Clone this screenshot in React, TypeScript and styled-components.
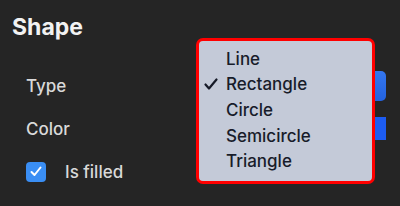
import React from 'react'
import styled, { createGlobalStyle } from 'styled-components'

const items = ['Line', 'Rectangle', 'Circle', 'Semicircle', 'Triangle']
const selected = 'Rectangle'

const App = () => {
  return (
    <Panel>
      <GlobalStyle />
      <Title>Shape</Title>
      <Form>
        <Row>
          <Label>Type</Label>
          <PopupButton />
        </Row>
        <Row>
          <Label>Color</Label>
          <ColorWell />
        </Row>
        <Row>
          <CheckRow>
            <CheckBox>
              <svg width="12" height="11" viewBox="0 0 12 11">
                <path d="M1.5 6 L4.5 9 L10.5 1.5" fill="none" stroke="#fff" strokeWidth="2" strokeLinecap="round" strokeLinejoin="round" />
              </svg>
            </CheckBox>
            <Label>Is filled</Label>
          </CheckRow>
        </Row>
      </Form>

      {/* open popup menu */}
      <Menu>
        {items.map((item) => (
          <MenuItem key={item}>
            <CheckSlot>
              {item === selected && (
                <svg width="14" height="12" viewBox="0 0 14 12">
                  <path d="M1.5 6.5 L5 10.5 L12.5 1.5" fill="none" stroke="#161a27" strokeWidth="2.2" strokeLinecap="round" strokeLinejoin="round" />
                </svg>
              )}
            </CheckSlot>
            {item}
          </MenuItem>
        ))}
      </Menu>
    </Panel>
  )
}

export default App

//Styled Components
const GlobalStyle = createGlobalStyle`
  body {
    margin: 0;
    background: #252525;
  }
`
const Panel = styled.div`
  position: relative;
  width: 400px;
  height: 206px;
  box-sizing: border-box;
  padding: 13px 14px 0 12px;
  background: #252525;
  font-family: Inter, "Liberation Sans", sans-serif;
  color: #e2e2e2;
  overflow: hidden;
`
const Title = styled.h1`
  margin: 0;
  font-size: 23px;
  line-height: 28px;
  font-weight: 700;
  color: #f2f2f2;
`
const Form = styled.div`
  display: flex;
  flex-direction: column;
  margin-top: 23px;
  padding-left: 14px;
`
const Row = styled.div`
  display: flex;
  align-items: center;
  justify-content: space-between;
  height: 43px;
`
const Label = styled.span`
  font-size: 17px;
  font-weight: 500;
  color: #d9d9d9;
`
const PopupButton = styled.div`
  width: 180px;
  height: 30px;
  border-radius: 5px;
  background: linear-gradient(#3477f0, #2362de);
`
const ColorWell = styled.div`
  width: 44px;
  height: 23px;
  background: #1d5cf2;
`
const CheckRow = styled.div`
  display: flex;
  align-items: center;
  gap: 19px;
`
const CheckBox = styled.div`
  width: 20px;
  height: 20px;
  border-radius: 4px;
  background: #3a8ef4;
  display: flex;
  align-items: center;
  justify-content: center;
`
const Menu = styled.div`
  position: absolute;
  left: 196px;
  top: 38px;
  width: 179px;
  height: 146px;
  box-sizing: border-box;
  border: 3px solid #ff0000;
  border-radius: 7px;
  background: #c4cad8;
  padding: 5px 0;
`
const MenuItem = styled.div`
  display: flex;
  align-items: center;
  height: 25.6px;
  font-size: 17px;
  font-weight: 500;
  color: #181c2a;
`
const CheckSlot = styled.span`
  display: flex;
  align-items: center;
  justify-content: flex-start;
  width: 27px;
  padding-left: 5px;
  box-sizing: border-box;
`
